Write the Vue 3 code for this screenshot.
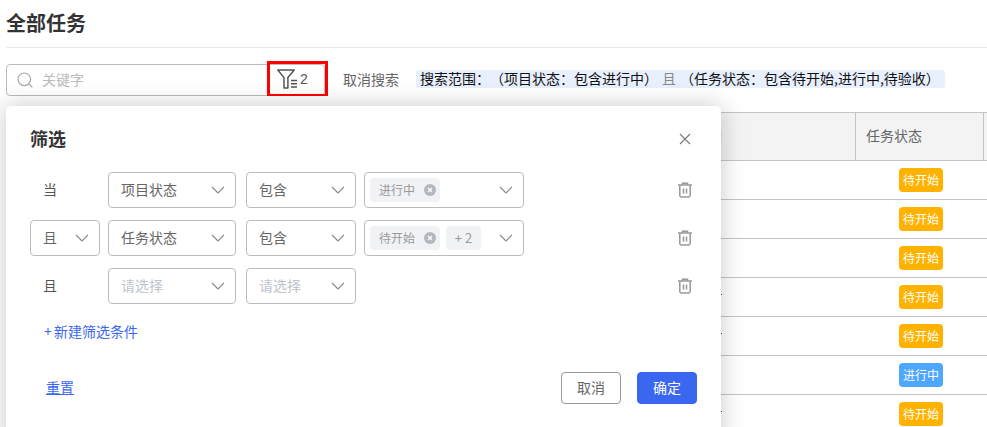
<template>
  <div class="page">
    <h1 class="page-title"><span>全部任务</span></h1>

    <div class="search-row">
      <div class="search-box">
        <svg class="search-icon" viewBox="0 0 16 16" fill="none" stroke="#aaa" stroke-width="1.2">
          <circle cx="7.3" cy="7.3" r="6.3" />
          <path d="M12 12l3.4 3.4" />
        </svg>
        <span class="search-placeholder">关键字</span>
        <div class="filter-btn">
          <svg class="filter-icon" viewBox="0 0 20 20" fill="none" stroke="#555" stroke-width="1.5">
            <path d="M.8 1h16.4l-6.3 7.6V19H7V8.6z" stroke-linejoin="round" />
            <path d="M14 11.6h6M14 14.8h6M14 18h6" />
          </svg>
          <span class="filter-count">2</span>
        </div>
      </div>
      <span class="cancel-search">取消搜索</span>
      <div class="search-scope"><span>搜索范围：（项目状态：包含进行中）</span><span class="scope-and">且</span><span>（任务状态：包含待开始,进行中,待验收）</span></div>
    </div>

    <div class="table">
      <div class="table-row table-head">
        <div class="cell cell-main"><span class="head-hidden">计划完成时间</span></div>
        <div class="cell cell-status"><span>任务状态</span></div>
        <div class="cell cell-rest"></div>
      </div>
      <div v-for="(row, i) in taskRows" :key="i" class="table-row">
        <div class="cell cell-main"><span v-if="row.dot" class="row-dot"></span></div>
        <div class="cell cell-status body-status">
          <span class="badge" :class="{ 'badge-blue': row.status === '进行中' }">{{ row.status }}</span>
        </div>
        <div class="cell cell-rest"></div>
      </div>
    </div>

    <div class="modal">
      <div class="modal-head">
        <span class="modal-title">筛选</span>
        <svg class="close-icon" viewBox="0 0 12 12" fill="none" stroke="#777" stroke-width="1.1">
          <path d="M1 1l10 10M11 1L1 11" />
        </svg>
      </div>

      <div class="rules">
        <div v-for="(rule, i) in rules" :key="i" class="rule">
          <div v-if="rule.joinSelect" class="select select-join">
            <span class="select-text">{{ rule.join }}</span>
            <svg class="chevron" viewBox="0 0 14 8" fill="none" stroke="#888" stroke-width="1.1"><path d="M1 1l6 6 6-6" /></svg>
          </div>
          <div v-else class="join-text"><span class="select-text">{{ rule.join }}</span></div>

          <div class="select select-field" :class="{ empty: !rule.field }">
            <span class="select-text">{{ rule.field || '请选择' }}</span>
            <svg class="chevron" viewBox="0 0 14 8" fill="none" stroke="#888" stroke-width="1.1"><path d="M1 1l6 6 6-6" /></svg>
          </div>
          <div class="select select-op" :class="{ empty: !rule.op }">
            <span class="select-text">{{ rule.op || '请选择' }}</span>
            <svg class="chevron" viewBox="0 0 14 8" fill="none" stroke="#888" stroke-width="1.1"><path d="M1 1l6 6 6-6" /></svg>
          </div>
          <div v-if="rule.tag" class="select select-value">
            <div class="tags">
              <span class="tag">
                <span class="tag-text">{{ rule.tag }}</span>
                <svg class="tag-close" viewBox="0 0 12 12">
                  <circle cx="6" cy="6" r="6" fill="#b4b7bd" />
                  <path d="M4 4l4 4M8 4l-4 4" stroke="#fff" stroke-width="1.1" />
                </svg>
              </span>
              <span v-if="rule.more" class="tag tag-more">+ {{ rule.more }}</span>
            </div>
            <svg class="chevron" viewBox="0 0 14 8" fill="none" stroke="#888" stroke-width="1.1"><path d="M1 1l6 6 6-6" /></svg>
          </div>

          <svg class="trash-icon" viewBox="0 0 16 16" fill="none" stroke="#999" stroke-width="1.5">
            <path d="M1 3h14M5.5 3V1.2h5V3" />
            <path d="M2.8 3v10.6c0 .9.5 1.4 1.4 1.4h7.6c.9 0 1.4-.5 1.4-1.4V3" />
            <path d="M6.5 6.5v5M9.5 6.5v5" />
          </svg>
        </div>
      </div>

      <div class="add-rule">+ 新建筛选条件</div>

      <div class="modal-foot">
        <span class="reset">重置</span>
        <div class="foot-btns">
          <button class="btn"><span>取消</span></button>
          <button class="btn btn-primary"><span>确定</span></button>
        </div>
      </div>
    </div>
  </div>
</template>

<script setup>
const taskRows = [
  { status: '待开始' },
  { status: '待开始' },
  { status: '待开始' },
  { status: '待开始', dot: true },
  { status: '待开始', dot: true },
  { status: '进行中' },
  { status: '待开始', dot: true }
]

const rules = [
  { join: '当', joinSelect: false, field: '项目状态', op: '包含', tag: '进行中' },
  { join: '且', joinSelect: true, field: '任务状态', op: '包含', tag: '待开始', more: 2 },
  { join: '且', joinSelect: false, field: '', op: '' }
]
</script>

<style>
html,
body {
  margin: 0;
  overflow: hidden;
  background: #fff;
}
</style>

<style scoped>
.page {
  position: relative;
  height: 427px;
  overflow: hidden;
  padding-left: 6px;
  box-sizing: border-box;
  font-family: "Noto Sans CJK SC", "Liberation Sans", sans-serif;
  font-size: 14px;
  color: #666;
  text-spacing-trim: space-all;
}

.page-title {
  display: flex;
  align-items: center;
  margin: 0;
  height: 47px;
  font-size: 20px;
  font-weight: 700;
  color: #333;
  border-bottom: 1px solid #e8e8e8;
}

.page-title span {
  margin-top: -2px;
}

.search-row {
  display: flex;
  align-items: center;
  margin-top: 16px;
  height: 32px;
}

.search-box {
  position: relative;
  display: flex;
  align-items: center;
  width: 319px;
  height: 32px;
  box-sizing: border-box;
  padding-left: 10px;
  border: 1px solid #bbb;
  border-radius: 4px;
}

.search-icon {
  width: 16px;
  height: 16px;
}

.search-placeholder {
  margin-left: 9px;
  margin-top: -2px;
  color: #bbb;
}

.filter-btn {
  position: absolute;
  left: 260px;
  top: -4px;
  display: flex;
  align-items: center;
  width: 61px;
  height: 35px;
  box-sizing: border-box;
  padding-left: 7px;
  border: solid #f00;
  border-width: 3px 3px 2px;
}

.filter-icon {
  width: 20px;
  height: 20px;
}

.filter-count {
  margin-left: 3px;
  color: #555;
  font-family: "Liberation Sans", sans-serif;
}

.cancel-search {
  margin-left: 18px;
  margin-top: -2px;
  color: #666;
}

.search-scope {
  display: flex;
  align-items: center;
  height: 18px;
  margin-left: 17px;
  margin-top: -2px;
  padding: 0 5px 0 4px;
  background: #e8effd;
  border-radius: 3px;
  color: #111;
  white-space: nowrap;
}

.search-scope span {
  margin-top: -2px;
}

.scope-and {
  margin: 0 4px;
  color: #888;
}

.table {
  margin-top: 16px;
  border-top: 1px solid #c4c4c4;
}

.table-row {
  display: flex;
  height: 39px;
  box-sizing: border-box;
  border-bottom: 1px solid #c4c4c4;
}

.table-head {
  height: 48px;
  background: #f3f3f3;
}

.cell {
  display: flex;
  align-items: center;
  box-sizing: border-box;
}

.cell-main {
  width: 849px;
  justify-content: flex-end;
  padding-right: 133px;
}

.cell-status {
  width: 129px;
  padding-left: 10px;
}

.table-head .cell-status {
  border-left: 1px solid #c4c4c4;
  border-right: 1px solid #c4c4c4;
}

.table-head .cell-status span,
.head-hidden {
  margin-top: -3px;
}

.cell-rest {
  flex: 1;
}

.row-dot {
  width: 1px;
  height: 1px;
  margin-bottom: 6px;
  background: #2b4a8a;
}

.body-status {
  padding-left: 44px;
}

.badge {
  width: 44px;
  height: 24px;
  line-height: 23px;
  text-align: center;
  border-radius: 4px;
  background: #ffb300;
  color: #fff;
  font-size: 12px;
}

.badge-blue {
  background: #4da6ff;
}

.modal {
  position: absolute;
  left: 6px;
  top: 106px;
  width: 715px;
  height: 340px;
  box-sizing: border-box;
  padding: 20px 24px 0;
  background: #fff;
  border-radius: 5px;
  box-shadow: 0 0 24px rgba(0, 0, 0, 0.22);
}

.modal-head {
  display: flex;
  align-items: center;
  justify-content: space-between;
  height: 26px;
  padding-right: 6px;
}

.modal-title {
  margin-top: -3px;
  font-size: 18px;
  font-weight: 700;
  color: #333;
}

.close-icon {
  width: 12px;
  height: 12px;
}

.rules {
  display: flex;
  flex-direction: column;
  gap: 12px;
  margin-top: 20px;
}

.rule {
  display: flex;
  align-items: center;
  height: 36px;
}

.join-text {
  display: flex;
  align-items: center;
  width: 70px;
  padding-left: 13px;
  box-sizing: border-box;
  color: #555;
}

.select {
  display: flex;
  align-items: center;
  justify-content: space-between;
  height: 36px;
  box-sizing: border-box;
  padding: 0 10px 0 12px;
  border: 1px solid #bbb;
  border-radius: 4px;
  color: #666;
}

.select-text {
  margin-top: -2px;
}

.select.empty {
  color: #c0c4cc;
}

.select-join {
  width: 70px;
}

.select-field {
  width: 128px;
  margin-left: 8px;
}

.select-op {
  width: 110px;
  margin-left: 10px;
}

.select-value {
  width: 160px;
  margin-left: 8px;
  padding-left: 5px;
}

.chevron {
  flex: none;
  width: 14px;
  height: 8px;
}

.tags {
  display: flex;
  gap: 6px;
}

.tag {
  display: flex;
  align-items: center;
  justify-content: space-between;
  width: 70px;
  height: 24px;
  box-sizing: border-box;
  padding: 0 4px 0 9px;
  border-radius: 4px;
  background: #f0f2f5;
  color: #999;
  font-size: 12px;
}

.tag-text {
  margin-top: -2px;
}

.tag-more {
  width: 35px;
  padding: 0 0 2px;
  justify-content: center;
  font-size: 13px;
}

.tag-close {
  width: 12px;
  height: 12px;
}

.trash-icon {
  width: 16px;
  height: 16px;
  margin-left: auto;
  margin-right: 4px;
}

.add-rule {
  display: flex;
  align-items: center;
  height: 18px;
  margin-top: 18px;
  padding-left: 14px;
  color: #3a66f0;
  white-space: pre;
  word-spacing: -1px;
}

.modal-foot {
  display: flex;
  align-items: center;
  justify-content: space-between;
  margin-top: 32px;
}

.reset {
  margin-left: 16px;
  margin-top: -3px;
  color: #3a66f0;
  text-decoration: underline;
}

.foot-btns {
  display: flex;
  gap: 16px;
}

.btn {
  width: 60px;
  height: 32px;
  padding: 0 0 2px;
  border: 1px solid #999;
  border-radius: 4px;
  background: #fff;
  color: #666;
  font: inherit;
}

.btn-primary {
  border-color: #3a66f0;
  background: #3a66f0;
  color: #fff;
}
</style>
